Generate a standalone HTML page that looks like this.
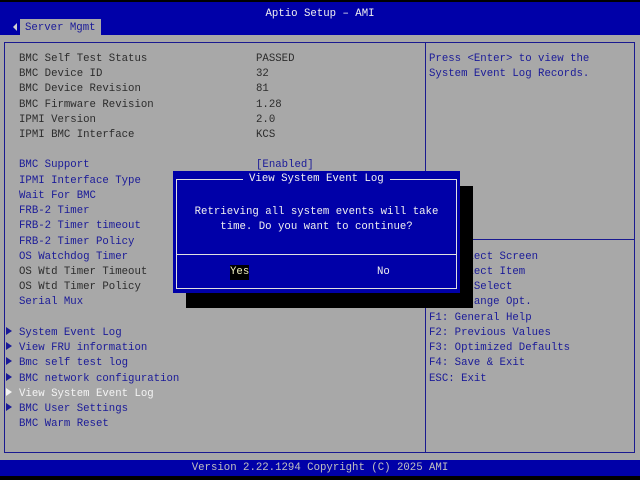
<!DOCTYPE html>
<html><head><meta charset="utf-8"><style>
*{margin:0;padding:0}
body{width:640px;height:480px;background:#000;position:relative;overflow:hidden;font-family:"Liberation Mono","DejaVu Sans Mono",monospace;font-size:10.7px;}
.a{position:absolute;white-space:pre;line-height:15px;height:15px;margin-top:2px}
.g{color:#2c2c2c}.b{color:#1a1a98}.w{color:#f4f4f4}
.t{position:absolute}
.ar{position:absolute;left:6px;width:0;height:0;border-top:4px solid transparent;border-bottom:4px solid transparent;border-left:6px solid #1a1a98}
</style></head><body>
<div class="t" style="left:0;top:2px;width:640px;height:33px;background:#0000a8"></div>
<div class="a" style="left:0;top:5px;width:640px;text-align:center;color:#f0f0f0">Aptio Setup – AMI</div>
<div class="t" style="left:20px;top:19px;width:81px;height:16px;background:#a8a8a8"></div>
<div class="t" style="left:13px;top:23px;width:0;height:0;border-top:4px solid transparent;border-bottom:4px solid transparent;border-right:4px solid #d0d0d0"></div>
<div class="a" style="left:25px;top:19px;color:#1a1a98">Server Mgmt</div>
<div class="t" style="left:0;top:35px;width:640px;height:425px;background:#a8a8a8"></div>
<div class="t" style="left:4px;top:42px;width:420px;height:409px;border:1px solid #1a1a90"></div>
<div class="t" style="left:425px;top:42px;width:208px;height:409px;border:1px solid #1a1a90"></div>
<div class="t" style="left:426px;top:239px;width:208px;height:1px;background:#1a1a90"></div>
<div class="t" style="left:0;top:460px;width:640px;height:16px;background:#0000a8"></div>
<div class="a" style="left:0;top:459px;width:640px;text-align:center;color:#c0c0c0">Version 2.22.1294 Copyright (C) 2025 AMI</div>

<div class="a g" style="left:19px;top:50px">BMC Self Test Status</div><div class="a g" style="left:256px;top:50px">PASSED</div>
<div class="a g" style="left:19px;top:65px">BMC Device ID</div><div class="a g" style="left:256px;top:65px">32</div>
<div class="a g" style="left:19px;top:80px">BMC Device Revision</div><div class="a g" style="left:256px;top:80px">81</div>
<div class="a g" style="left:19px;top:96px">BMC Firmware Revision</div><div class="a g" style="left:256px;top:96px">1.28</div>
<div class="a g" style="left:19px;top:111px">IPMI Version</div><div class="a g" style="left:256px;top:111px">2.0</div>
<div class="a g" style="left:19px;top:126px">IPMI BMC Interface</div><div class="a g" style="left:256px;top:126px">KCS</div>
<div class="a b" style="left:19px;top:156px">BMC Support</div><div class="a b" style="left:256px;top:156px">[Enabled]</div>
<div class="a b" style="left:19px;top:172px">IPMI Interface Type</div>
<div class="a b" style="left:19px;top:187px">Wait For BMC</div>
<div class="a b" style="left:19px;top:202px">FRB-2 Timer</div>
<div class="a b" style="left:19px;top:217px">FRB-2 Timer timeout</div>
<div class="a b" style="left:19px;top:233px">FRB-2 Timer Policy</div>
<div class="a b" style="left:19px;top:248px">OS Watchdog Timer</div>
<div class="a g" style="left:19px;top:263px">OS Wtd Timer Timeout</div>
<div class="a g" style="left:19px;top:278px">OS Wtd Timer Policy</div>
<div class="a b" style="left:19px;top:293px">Serial Mux</div>
<div class="ar" style="top:327px"></div><div class="a b" style="left:19px;top:324px">System Event Log</div>
<div class="ar" style="top:342px"></div><div class="a b" style="left:19px;top:339px">View FRU information</div>
<div class="ar" style="top:357px"></div><div class="a b" style="left:19px;top:354px">Bmc self test log</div>
<div class="ar" style="top:373px"></div><div class="a b" style="left:19px;top:370px">BMC network configuration</div>
<div class="ar" style="top:388px;border-left-color:#f4f4f4"></div><div class="a w" style="left:19px;top:385px">View System Event Log</div>
<div class="ar" style="top:403px"></div><div class="a b" style="left:19px;top:400px">BMC User Settings</div>
<div class="a b" style="left:19px;top:415px">BMC Warm Reset</div>

<div class="a b" style="left:429px;top:50px">Press &lt;Enter&gt; to view the</div>
<div class="a b" style="left:429px;top:65px">System Event Log Records.</div>
<div class="a b" style="left:429px;top:248px">→←: Select Screen</div>
<div class="a b" style="left:429px;top:263px">↑↓: Select Item</div>
<div class="a b" style="left:429px;top:278px">Enter: Select</div>
<div class="a b" style="left:429px;top:293px">+/-: Change Opt.</div>
<div class="a b" style="left:429px;top:309px">F1: General Help</div>
<div class="a b" style="left:429px;top:324px">F2: Previous Values</div>
<div class="a b" style="left:429px;top:339px">F3: Optimized Defaults</div>
<div class="a b" style="left:429px;top:354px">F4: Save &amp; Exit</div>
<div class="a b" style="left:429px;top:370px">ESC: Exit</div>

<div class="t" style="left:186px;top:186px;width:287px;height:122px;background:#000"></div>
<div class="t" style="left:173px;top:171px;width:287px;height:122px;background:#0000a8"></div>
<div class="t" style="left:176px;top:179px;width:279px;height:108px;border:1px solid #e0e0e0"></div>
<div class="t" style="left:177px;top:254px;width:279px;height:1px;background:#e0e0e0"></div>
<div class="a" style="left:243px;top:170px;padding:0 6px;background:#0000a8;color:#f0f0f0">View System Event Log</div>
<div class="a" style="left:173px;top:203px;width:287px;text-align:center;color:#f0f0f0">Retrieving all system events will take</div>
<div class="a" style="left:173px;top:218px;width:287px;text-align:center;color:#f0f0f0">time. Do you want to continue?</div>
<div class="a" style="left:230px;top:263px;background:#000;color:#f0f0c0">Yes</div>
<div class="a" style="left:377px;top:263px;color:#f0f0f0">No</div>
</body></html>
